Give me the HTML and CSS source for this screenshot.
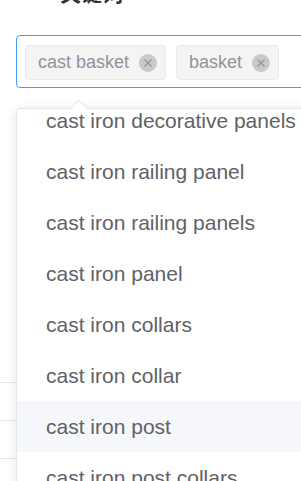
FILE: index.html
```html
<!DOCTYPE html>
<html lang="zh">

<head>
    <meta charset="UTF-8">
    <title>关键词</title>
    <link rel="stylesheet" href="styles.css">
</head>

<body>

    <!-- 标题 -->
    <div class="title">关键词</div>

    <!-- 多选输入框 -->
    <div class="select-box">
        <span class="tag">cast basket
            <span class="tag-close"><svg viewBox="0 0 18 18" width="18" height="18"><path d="M5.5 5.5l7 7M12.5 5.5l-7 7" stroke="#909399" stroke-width="1.2" fill="none"/></svg></span>
        </span>
        <span class="tag">basket
            <span class="tag-close"><svg viewBox="0 0 18 18" width="18" height="18"><path d="M5.5 5.5l7 7M12.5 5.5l-7 7" stroke="#909399" stroke-width="1.2" fill="none"/></svg></span>
        </span>
    </div>

    <!-- 后面的表单行 -->
    <div class="rows">
        <div class="row"></div>
        <div class="row"></div>
        <div class="row"><span class="ring"></span></div>
    </div>

    <!-- 下拉建议 -->
    <div class="dropdown">
        <div class="dropdown-inner">
            <ul class="options">
                <li>cast iron decorative panels</li>
                <li>cast iron railing panel</li>
                <li>cast iron railing panels</li>
                <li>cast iron panel</li>
                <li>cast iron collars</li>
                <li>cast iron collar</li>
                <li class="hover">cast iron post</li>
                <li>cast iron post collars</li>
            </ul>
        </div>
    </div>

</body>

</html>
```

FILE: styles.css
```css
html,
body {
    margin: 0;
    height: 100%;
    overflow: hidden;
}

body {
    position: relative;
    background: white;
    font-family: "Liberation Sans", Arial, "Noto Sans CJK SC", sans-serif;
}

.title {
    margin: -18px 0 0 60px;
    height: 21px;
    line-height: 21px;
    font-size: 21px;
    font-weight: bold;
    color: #303133;
    font-family: "Noto Sans CJK SC", sans-serif;
}

.select-box {
    margin: 32px 0 0 16px;
    width: 340px;
    box-sizing: border-box;
    height: 53px;
    padding: 9px 8px 0;
    border: 1px solid #409eff;
    border-radius: 4px;
    display: flex;
    gap: 10px;
}

.tag {
    display: flex;
    align-items: center;
    height: 35px;
    box-sizing: border-box;
    padding: 0 8px 0 12px;
    background: #f4f4f5;
    border: 1px solid #e9e9eb;
    border-radius: 4px;
    color: #909399;
    font-size: 18px;
}

.tag-close {
    display: block;
    width: 18px;
    height: 18px;
    margin-left: 10px;
    border-radius: 50%;
    background: #c8c9cc;
}

.tag-close svg {
    display: block;
}

.rows {
    margin-top: 294px;
}

.row {
    height: 37px;
    border-top: 1px solid #e4e7ed;
}

.ring {
    display: block;
    width: 32px;
    height: 32px;
    margin: 27px 0 0 -17px;
    box-sizing: border-box;
    border: 1px solid #dcdfe6;
    border-radius: 50%;
}

.dropdown {
    position: absolute;
    top: 108px;
    left: 16px;
    width: 340px;
    height: 420px;
    background: white;
    border: 1px solid #e4e7ed;
    border-radius: 4px;
    box-shadow: 0 2px 12px rgba(0, 0, 0, 0.1);
}

.dropdown::before {
    content: "";
    position: absolute;
    top: -7px;
    left: 56px;
    width: 11px;
    height: 11px;
    background: white;
    border-top: 1px solid #e4e7ed;
    border-left: 1px solid #e4e7ed;
    transform: rotate(45deg);
}

.dropdown-inner {
    height: 100%;
    overflow: hidden;
}

.options {
    list-style: none;
    margin: -14px 0 0;
    padding: 0;
}

.options li {
    height: 51px;
    line-height: 51px;
    padding: 0 29px;
    font-size: 21px;
    color: #606266;
    white-space: nowrap;
}

.options li.hover {
    background: #f5f7fa;
}
```
